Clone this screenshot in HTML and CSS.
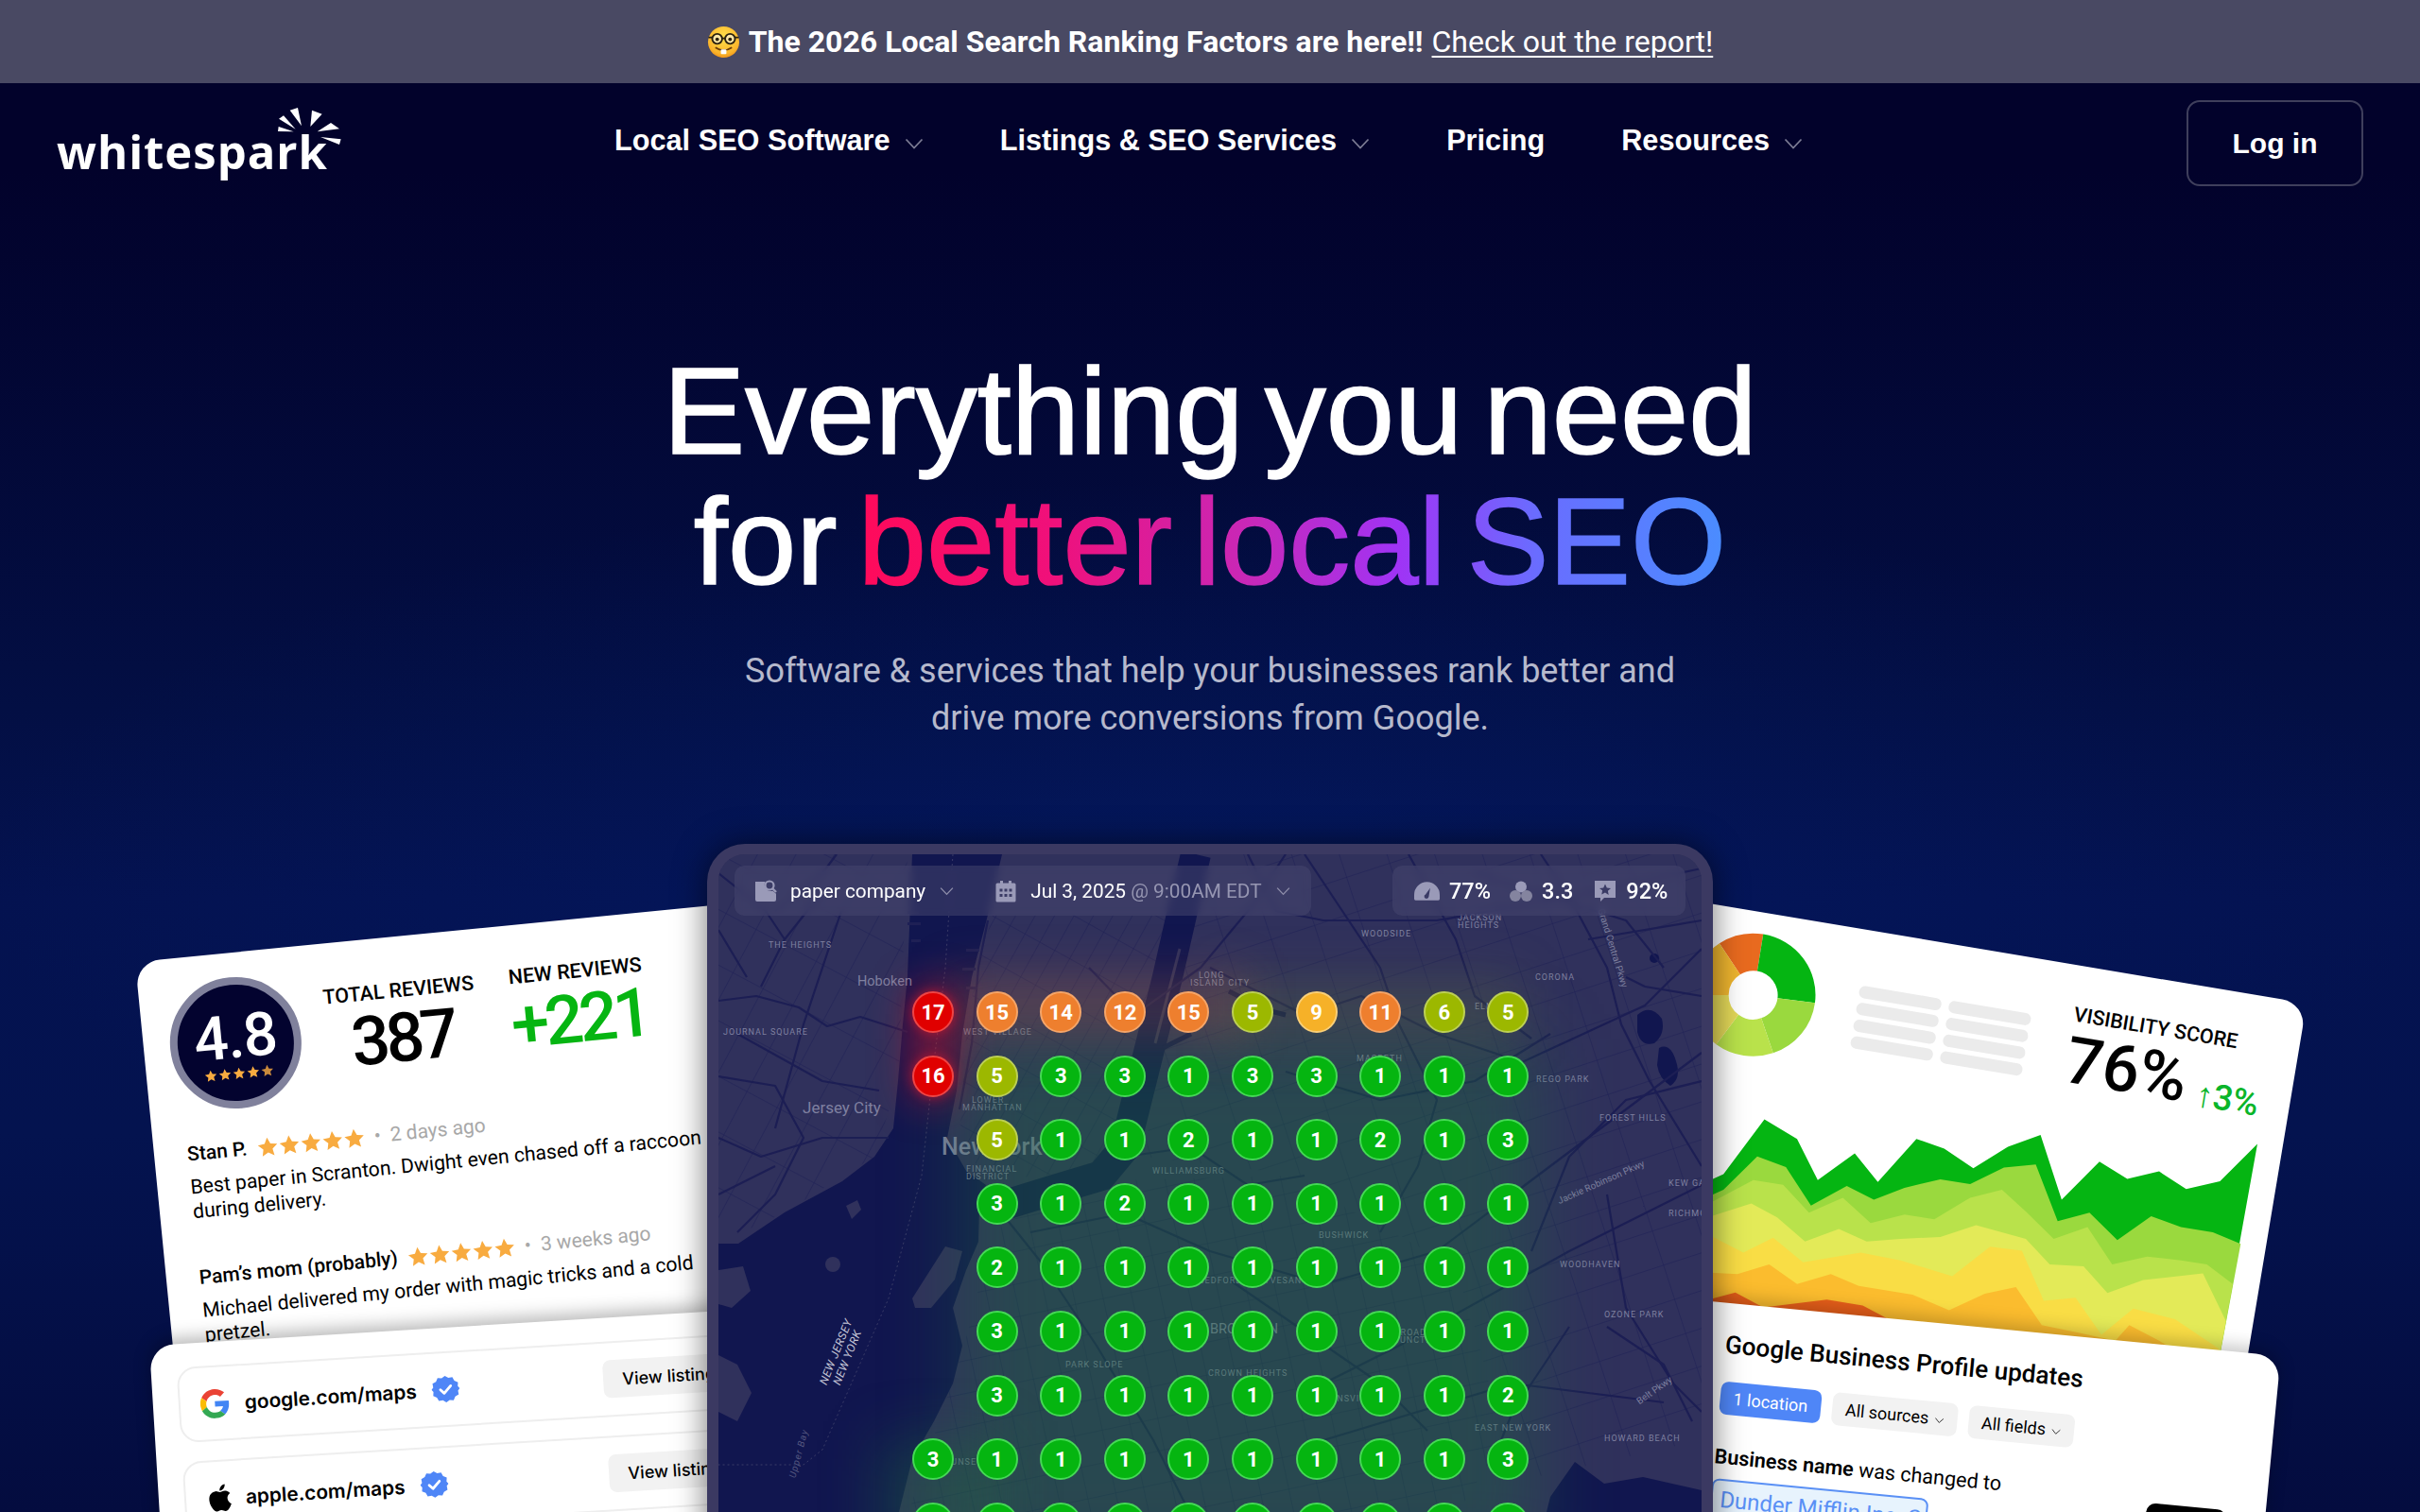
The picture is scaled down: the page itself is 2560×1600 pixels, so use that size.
FILE: index.html
```html
<!DOCTYPE html>
<html lang="en">
<head>
<meta charset="utf-8">
<title>Whitespark</title>
<link rel="stylesheet" href="styles.css">
</head>
<body>
<svg class="defs" width="0" height="0" aria-hidden="true">
  <defs>
    <symbol id="star" viewBox="0 0 24 24"><path d="M12 1.500l3.200 6.900 7.500.9-5.600 5.100 1.500 7.400L12 18.100l-6.600 3.700 1.500-7.400-5.600-5.100 7.500-.9z"/></symbol>
    <symbol id="chev" viewBox="0 0 20 12"><path d="M1.500 1.500L10 10.500l8.500-9" fill="none" stroke="currentColor" stroke-width="1.800"/></symbol>
    <symbol id="badge" viewBox="0 0 30 30">
      <path fill="#4f86f7" d="M15 1l3.600 2.300 4.200-.5 1.900 3.800 3.800 1.900-.5 4.200L30 15l-2 2.300.5 4.200-3.800 1.900-1.900 3.800-4.200-.5L15 29l-3.600-2.300-4.200.5-1.900-3.800-3.800-1.900.5-4.200L0 15l2-2.300-.5-4.200 3.800-1.900 1.900-3.800 4.200.5z"/>
      <path d="M9.500 15.500l3.800 3.800 7.200-7.500" fill="none" stroke="#fff" stroke-width="2.800" stroke-linecap="round" stroke-linejoin="round"/>
    </symbol>
  </defs>
</svg>

<div class="banner">
  <svg class="nerd" viewBox="0 0 36 36" aria-hidden="true">
    <defs><radialGradient id="nerdFace" cx="50%" cy="35%" r="70%"><stop offset="0" stop-color="#ffe14d"/><stop offset=".75" stop-color="#fbb52b"/><stop offset="1" stop-color="#ec8a14"/></radialGradient></defs>
    <circle cx="18" cy="18" r="17" fill="url(#nerdFace)"/>
    <circle cx="11" cy="14.500" r="5.400" fill="#ffe9a8" stroke="#2b2210" stroke-width="2"/>
    <circle cx="25" cy="14.500" r="5.400" fill="#ffe9a8" stroke="#2b2210" stroke-width="2"/>
    <path d="M16 14h4M1.500 13h4M30.500 13h4" stroke="#2b2210" stroke-width="2"/>
    <circle cx="11" cy="15" r="2" fill="#2b2210"/><circle cx="25" cy="15" r="2" fill="#2b2210"/>
    <path d="M9 24q9 6 18 0" fill="none" stroke="#6b3d08" stroke-width="1.800"/>
    <rect x="15" y="26" width="6" height="5" rx="1" fill="#fff"/>
  </svg>
  <span class="banner-strong">The 2026 Local Search Ranking Factors are here!!</span>
  <a class="banner-link" href="#">Check out the report!</a>
</div>

<nav class="nav">
  <a class="logo" href="#">
    <span class="logo-word">whitespark</span>
    <svg class="logo-rays" viewBox="0 0 300 270" aria-hidden="true">
      <path fill="#fff" d="M110 38l25-8 12 58zM180 38l32 12-37 40zM75 65l15-10 38 43zM74 90l-2 15 50 1zM240 78l27 19-70 9zM272 130l-5 17-60-24z"/>
    </svg>
  </a>
  <ul class="nav-links">
    <li class="nav-item">Local SEO Software <svg class="chev"><use href="#chev"/></svg></li>
    <li class="nav-item">Listings &amp; SEO Services <svg class="chev"><use href="#chev"/></svg></li>
    <li class="nav-item">Pricing</li>
    <li class="nav-item">Resources <svg class="chev"><use href="#chev"/></svg></li>
  </ul>
  <a class="login" href="#">Log in</a>
</nav>

<header class="hero">
  <h1 class="title">Everything you need<br>for <span class="grad">better local SEO</span></h1>
  <p class="sub">Software &amp; services that help your businesses rank better and<br>drive more conversions from Google.</p>
</header>

<section class="stage">

  <article class="card reviews">
    <div class="rev-head">
      <div class="rating">
        <b class="rating-num">4.8</b>
        <span class="rating-stars">
          <svg><use href="#star"/></svg><svg><use href="#star"/></svg><svg><use href="#star"/></svg><svg><use href="#star"/></svg><svg class="half"><use href="#star"/></svg>
        </span>
      </div>
      <div class="stat stat-total"><span class="stat-label">TOTAL REVIEWS</span><strong class="stat-num">387</strong></div>
      <div class="stat stat-new"><span class="stat-label">NEW REVIEWS</span><strong class="stat-num green">+221</strong></div>
    </div>
    <div class="review">
      <div class="rev-meta"><b>Stan P.</b>
        <span class="stars"><svg><use href="#star"/></svg><svg><use href="#star"/></svg><svg><use href="#star"/></svg><svg><use href="#star"/></svg><svg><use href="#star"/></svg></span>
        <span class="rev-date">•</span><span class="rev-date">2 days ago</span></div>
      <p>Best paper in Scranton. Dwight even chased off a raccoon during delivery.</p>
    </div>
    <div class="review">
      <div class="rev-meta"><b>Pam’s mom (probably)</b>
        <span class="stars"><svg><use href="#star"/></svg><svg><use href="#star"/></svg><svg><use href="#star"/></svg><svg><use href="#star"/></svg><svg><use href="#star"/></svg></span>
        <span class="rev-date">•</span><span class="rev-date">3 weeks ago</span></div>
      <p>Michael delivered my order with magic tricks and a cold pretzel.</p>
    </div>
  </article>

  <article class="card listings">
    <div class="listing">
      <svg class="brand" viewBox="0 0 48 48" aria-hidden="true">
        <path fill="#ea4335" d="M24 9.500c3.500 0 6.700 1.200 9.200 3.600l6.900-6.900C35.900 2.400 30.500 0 24 0 14.600 0 6.500 5.400 2.600 13.200l8 6.200C12.400 13.700 17.700 9.500 24 9.500z"/>
        <path fill="#4285f4" d="M47 24.500c0-1.600-.1-3.100-.4-4.500H24v9h12.900c-.6 3-2.300 5.500-4.800 7.200l7.700 6C44.300 38 47 31.800 47 24.500z"/>
        <path fill="#fbbc05" d="M10.500 28.600c-.5-1.400-.8-3-.8-4.600s.3-3.200.8-4.600l-8-6.200C.9 16.500 0 20.100 0 24s.9 7.500 2.600 10.800z"/>
        <path fill="#34a853" d="M24 48c6.500 0 11.900-2.100 15.900-5.800l-7.700-6c-2.200 1.400-4.900 2.300-8.200 2.300-6.300 0-11.600-4.200-13.500-9.900l-8 6.200C6.500 42.600 14.600 48 24 48z"/>
      </svg>
      <span class="listing-name">google.com/maps</span>
      <svg class="verified"><use href="#badge"/></svg>
      <span class="listing-btn">View listing</span>
    </div>
    <div class="listing">
      <svg class="brand brand-apple" viewBox="2 1 20 22" aria-hidden="true"><path fill="#000" d="M17.050 12.540c-.03-2.550 2.080-3.770 2.170-3.830-1.180-1.730-3.030-1.970-3.680-2-1.570-.16-3.060.92-3.860.92-.8 0-2.030-.9-3.330-.87-1.710.03-3.290 1-4.170 2.530-1.780 3.090-.46 7.660 1.280 10.170.85 1.230 1.860 2.610 3.190 2.560 1.280-.05 1.760-.83 3.310-.83 1.540 0 1.980.83 3.330.8 1.380-.02 2.250-1.250 3.090-2.490.98-1.430 1.380-2.810 1.400-2.880-.03-.01-2.690-1.030-2.730-4.280zM14.510 5.060c.7-.86 1.180-2.040 1.050-3.230-1.010.04-2.240.68-2.970 1.530-.65.750-1.220 1.960-1.070 3.120 1.130.09 2.290-.57 2.990-1.420z"/></svg>
      <span class="listing-name">apple.com/maps</span>
      <svg class="verified"><use href="#badge"/></svg>
      <span class="listing-btn">View listing</span>
    </div>
  </article>

  <article class="card visibility">
    <svg class="vis-art" aria-hidden="true">
      <g transform="rotate(-9.5) translate(70 7) scale(.4209 .4149)">
        <path fill="#e86a1f" d="M45 116A157 157 0 0 1 155 93L140 187A62 62 0 0 0 97 196Z"/>
        <path fill="#05b512" d="M155 93A157 157 0 0 1 285 268L191 256A62 62 0 0 0 140 187Z"/>
        <path fill="#9ad93e" d="M285 268A157 157 0 0 1 180 396L150 307A62 62 0 0 0 191 256Z"/>
        <path fill="#b9e24b" d="M180 396A157 157 0 0 1 37 374L93 298A62 62 0 0 0 150 307Z"/>
        <path fill="#e3d858" d="M37 374A157 157 0 0 1 -27 248L68 248A62 62 0 0 0 93 298Z"/>
        <path fill="#eeb52f" d="M-27 248A157 157 0 0 1 45 116L97 196A62 62 0 0 0 68 248Z"/>
        <path fill="#05b512" d="M-60 740L0 730 55 705 158 565 240 615 292 720 385 652 443 725 540 615 610 640 683 690 770 635 852 605 905 770 1000 673 1070 717 1150 698 1218 743 1303 723 1397 628 1260 1400-60 1400Z"/>
        <path fill="#9ad93e" d="M-60 790L0 770 55 745 140 660 212 687 275 785 365 735 433 770 510 740 600 718 675 730 760 688 840 680 895 825 975 803 1045 873 1130 812 1205 840 1285 853 1355 883 1260 1400-60 1400Z"/>
        <path fill="#b9e24b" d="M-60 810L0 790 130 720 205 732 270 803 355 765 425 830 510 808 585 820 675 765 755 745 815 800 885 870 970 840 1032 935 1120 915 1205 925 1270 935 1335 985 1260 1400-60 1400Z"/>
        <path fill="#e3ea58" d="M-60 840L0 820 125 780 190 815 260 877 345 845 415 877 500 870 600 865 690 835 815 870 875 935 960 940 1020 1008 1110 975 1260 958 1318 1080 1260 1400-60 1400Z"/>
        <path fill="#f9dd45" d="M-60 820L0 850 105 905 180 867 255 930 400 905 500 925 630 965 725 890 805 900 860 1028 940 1020 1005 1115 1085 1048 1190 1075 1300 1150 1260 1400-60 1400Z"/>
        <path fill="#fbbc2e" d="M-60 950L0 955 90 960 170 935 240 985 325 960 395 990 530 1012 622 1052 712 1010 790 993 855 1090 950 1110 1040 1130 1075 1090 1150 1130 1200 1160 1200 1400-60 1400Z"/>
        <path fill="#e85f1a" d="M-60 1040L0 1030 85 1007 155 1045 315 1025 405 1040 470 1075 600 1400-60 1400Z"/>
      </g>
    </svg>
    <div class="vis-head">
      <div class="bars"><i></i><i></i><i></i><i></i><i></i><i></i><i></i><i></i></div>
      <div class="score">
        <span class="score-label">VISIBILITY SCORE</span>
        <div class="score-row"><strong>76%</strong><span class="score-delta">↑3%</span></div>
      </div>
    </div>
  </article>

  <article class="card updates">
    <h3 class="upd-title">Google Business Profile updates</h3>
    <div class="chips">
      <span class="chip chip-on">1 location</span>
      <span class="chip">All sources <svg class="chip-chev"><use href="#chev"/></svg></span>
      <span class="chip">All fields <svg class="chip-chev"><use href="#chev"/></svg></span>
    </div>
    <div class="upd-body">
      <div class="upd-col">
        <p class="upd-line"><b>Business name</b> was changed to</p>
        <span class="upd-value">Dunder Mifflin Inc. Scranton</span>
      </div>
      <span class="upd-black"></span>
    </div>
  </article>

  <div class="mapframe">
    <div class="map">
      <svg class="map-art" viewBox="0 0 1040 700" aria-hidden="true">
        <defs>
          <pattern id="gm" width="18" height="42" patternUnits="userSpaceOnUse" patternTransform="rotate(29)"><path d="M0 0H18M0 0V42" stroke="#1d1f55" stroke-width="1" fill="none"/></pattern>
          <pattern id="gb" width="30" height="34" patternUnits="userSpaceOnUse" patternTransform="rotate(-12)"><path d="M0 0H30M0 0V34" stroke="#1e2056" stroke-width="1" fill="none"/></pattern>
          <pattern id="gq" width="48" height="38" patternUnits="userSpaceOnUse" patternTransform="rotate(-18)"><path d="M0 0H48M0 0V38" stroke="#1e2056" stroke-width="1" fill="none"/></pattern>
          <pattern id="gj" width="52" height="36" patternUnits="userSpaceOnUse" patternTransform="rotate(-62)"><path d="M0 0H52M0 0V36" stroke="#1e2056" stroke-width="1" fill="none"/></pattern>
        </defs>
        <rect width="1040" height="700" fill="#30315c"/>
        <path fill="url(#gj)" d="M0 0H200L190 240 165 320 70 379 0 412Z"/>
        <path fill="url(#gm)" d="M290 64L490 64 470 130 450 190 430 310 400 335 283 345 255 300 262 190 272 130Z"/>
        <path fill="url(#gq)" d="M500 0L1040 0 1040 300 780 440 620 340 450 320 480 140Z"/>
        <path fill="url(#gb)" d="M300 390L430 345 600 340 750 420 800 500 830 620 780 700 200 700 260 520 280 440Z"/>
        <path fill="url(#gq)" d="M780 440L1040 300 1040 620 860 660 830 620 800 500Z"/>
        <g fill="#11164f">
          <path d="M205 0L300 0 285 64 268 130 258 190 252 250 242 300 262 335 283 350 276 372 275 410 262 440 248 480 258 520 248 560 228 600 205 640 190 700 0 700 0 412 21 412 70 379 131 346 165 320 185 290 190 240 195 180 200 130Z"/>
          <path d="M875 700L880 680 906 643 937 666 978 659 1040 673 1040 700Z"/>
          <path d="M972 170q14-12 26 4q4 16-8 26q-14 4-18-12z"/>
          <path d="M995 205q12-6 18 14q6 18-6 26q-12-8-14-22z"/>
          <circle cx="990" cy="110" r="5"/>
        </g>
        <path d="M505 0L490 64 475 130 460 190 445 250 430 310 405 340 355 355 300 372" fill="none" stroke="#11164f" stroke-width="32"/>
        <path d="M540 145L580 165 600 170M470 205L500 190" fill="none" stroke="#11164f" stroke-width="5"/>
        <path d="M488 100L462 200" fill="none" stroke="#30315c" stroke-width="3"/>
        <g fill="#30315c">
          <path d="M205 470L240 415 258 420 250 450 225 480 208 480Z"/>
          <circle cx="121" cy="434" r="8"/>
          <path d="M135 372l12-6 4 10-10 10z"/>
          <path d="M0 530L20 540 35 570 20 600 0 590Z"/>
          <path d="M0 440L26 436 34 462 14 480 0 476Z"/>
        </g>
        <g fill="none" stroke="#1c1e54" stroke-width="2.200" stroke-linejoin="round">
          <path d="M0 155L40 150 85 162 115 182 150 172 200 188"/>
          <path d="M60 60L110 20 125 0"/>
          <path d="M45 140L70 90 110 40"/>
          <path d="M0 235L60 245 90 300 60 360 20 400"/>
          <path d="M285 70L275 120 268 200 255 270"/>
          <path d="M392 120L440 170 510 120 560 60 600 0"/>
          <path d="M520 120L620 170 680 150 760 190 850 220 980 160 1040 100"/>
          <path d="M620 0L660 60 700 120 720 180 760 260 740 330 700 400"/>
          <path d="M760 70L900 45 1040 15"/>
          <path d="M730 0L780 90 800 150 860 195"/>
          <path d="M870 0L900 45 940 120 955 180 985 240 1040 330"/>
          <path d="M1040 150L980 140 960 130"/>
          <path d="M800 20L960 70 1000 120"/>
          <path d="M600 230L700 260 800 240 880 190"/>
          <path d="M430 320L500 310 560 350 620 340"/>
          <path d="M300 380L340 430 400 520 460 620 500 700"/>
          <path d="M330 400L430 380 520 420 640 455 760 420 840 360 1040 210"/>
          <path d="M540 450L700 560 750 610"/>
          <path d="M640 560L720 520 900 420 1040 350"/>
          <path d="M940 360L960 480 1010 560 1040 590"/>
          <path d="M640 620L840 560 1000 580"/>
          <path d="M940 500L1000 540 1030 600"/>
          <path d="M820 640L840 590 900 500"/>
          <path d="M0 20L50 60 70 90M0 80L30 130M130 60L90 180 60 290M20 190L110 240 170 250"/>
          <path d="M0 300L45 320 110 300 180 300M0 360L60 330"/>
          <path d="M560 0L590 60 640 70 760 70M920 90L1040 70M1040 240L960 260 900 320 860 420"/>
        </g>
        <g fill="#1e2055">
          <path d="M200 60h12v3h-12zM200 72h14v3h-14zM204 90h10v3h-10zM262 100h14v3h-14zM258 120h14v3h-14zM262 140h12v3h-12z"/>
        </g>
        <g fill="none" stroke="#3a3c68" stroke-width="1" stroke-dasharray="2 3">
          <path d="M248 0L240 120 228 220 215 340 180 470 110 630 90 646H0"/>
        </g>
        <g class="map-labels">
          <text x="53" y="99">THE HEIGHTS</text>
          <text x="5" y="191">JOURNAL SQUARE</text>
          <text x="259" y="191">WEST VILLAGE</text>
          <text x="268" y="263">LOWER</text><text x="258" y="271" >MANHATTAN</text>
          <text x="262" y="336">FINANCIAL</text><text x="262" y="344">DISTRICT</text>
          <text x="508" y="131">LONG</text><text x="499" y="139">ISLAND CITY</text>
          <text x="680" y="87">WOODSIDE</text>
          <text x="864" y="133">CORONA</text>
          <text x="782" y="70">JACKSON</text><text x="782" y="78">HEIGHTS</text>
          <text x="675" y="219">MASPETH</text>
          <text x="800" y="164">ELMHURST</text>
          <text x="865" y="241">REGO PARK</text>
          <text x="932" y="282">FOREST HILLS</text>
          <text x="1005" y="351">KEW GARDENS</text>
          <text x="459" y="338">WILLIAMSBURG</text>
          <text x="1005" y="383">RICHMOND HILL</text>
          <text x="890" y="437">WOODHAVEN</text>
          <text x="635" y="406">BUSHWICK</text>
          <text x="508" y="454">BEDFORD-STUYVESANT</text>
          <text x="937" y="490">OZONE PARK</text>
          <text x="367" y="543">PARK SLOPE</text>
          <text x="518" y="552">CROWN HEIGHTS</text>
          <text x="625" y="579">BROWNSVILLE</text>
          <text x="800" y="610">EAST NEW YORK</text>
          <text x="937" y="621">HOWARD BEACH</text>
          <text x="240" y="646">SUNSET PARK</text>
          <text x="715" y="509">BROADWAY</text><text x="715" y="517">JUNCTION</text>
          <text x="147" y="139" class="lab-big">Hoboken</text>
          <text x="89" y="274" class="lab-lg">Jersey City</text>
          <text x="236" y="318" class="lab-xl">New York</text>
          <text x="520" y="507" class="lab-big">BROOKLYN</text>
          <text transform="translate(128 528) rotate(-68)" class="lab-state" text-anchor="middle">NEW JERSEY</text>
          <text transform="translate(140 534) rotate(-68)" class="lab-state" text-anchor="middle">NEW YORK</text>
          <text transform="translate(88 635) rotate(-75)" class="lab-water" text-anchor="middle">Upper Bay</text>
          <text transform="translate(943 100) rotate(73)" class="lab-road" text-anchor="middle">Grand Central Pkwy</text>
          <text transform="translate(935 350) rotate(-24)" class="lab-road" text-anchor="middle">Jackie Robinson Pkwy</text>
          <text transform="translate(992 570) rotate(-35)" class="lab-road" text-anchor="middle">Belt Pkwy</text>
        </g>
      </svg>
      <div class="heat heat-green"></div>
      <div class="heat heat-green2"></div>
      <div class="heat heat-olive"></div>
      <div class="heat heat-orange"></div>
      <div class="heat heat-red"></div>

      <div class="pins">
        <i class="pin r">17</i><i class="pin o">15</i><i class="pin o">14</i><i class="pin o">12</i><i class="pin o">15</i><i class="pin l">5</i><i class="pin y">9</i><i class="pin o">11</i><i class="pin l">6</i><i class="pin l">5</i>
        <i class="pin r">16</i><i class="pin l">5</i><i class="pin g">3</i><i class="pin g">3</i><i class="pin g">1</i><i class="pin g">3</i><i class="pin g">3</i><i class="pin g">1</i><i class="pin g">1</i><i class="pin g">1</i>
        <i class="pin none"></i><i class="pin l">5</i><i class="pin g">1</i><i class="pin g">1</i><i class="pin g">2</i><i class="pin g">1</i><i class="pin g">1</i><i class="pin g">2</i><i class="pin g">1</i><i class="pin g">3</i>
        <i class="pin none"></i><i class="pin g">3</i><i class="pin g">1</i><i class="pin g">2</i><i class="pin g">1</i><i class="pin g">1</i><i class="pin g">1</i><i class="pin g">1</i><i class="pin g">1</i><i class="pin g">1</i>
        <i class="pin none"></i><i class="pin g">2</i><i class="pin g">1</i><i class="pin g">1</i><i class="pin g">1</i><i class="pin g">1</i><i class="pin g">1</i><i class="pin g">1</i><i class="pin g">1</i><i class="pin g">1</i>
        <i class="pin none"></i><i class="pin g">3</i><i class="pin g">1</i><i class="pin g">1</i><i class="pin g">1</i><i class="pin g">1</i><i class="pin g">1</i><i class="pin g">1</i><i class="pin g">1</i><i class="pin g">1</i>
        <i class="pin none"></i><i class="pin g">3</i><i class="pin g">1</i><i class="pin g">1</i><i class="pin g">1</i><i class="pin g">1</i><i class="pin g">1</i><i class="pin g">1</i><i class="pin g">1</i><i class="pin g">2</i>
        <i class="pin g">3</i><i class="pin g">1</i><i class="pin g">1</i><i class="pin g">1</i><i class="pin g">1</i><i class="pin g">1</i><i class="pin g">1</i><i class="pin g">1</i><i class="pin g">1</i><i class="pin g">3</i>
        <i class="pin g">1</i><i class="pin g">1</i><i class="pin g">1</i><i class="pin g">1</i><i class="pin g">1</i><i class="pin g">1</i><i class="pin g">1</i><i class="pin g">1</i><i class="pin g">1</i><i class="pin g">1</i>
      </div>

      <div class="panel panel-left">
        <svg class="tool-ic" viewBox="0 0 24 24" aria-hidden="true">
          <path fill="#9a9ab8" d="M1 2h10.500a7 7 0 0 0 8 9.800l3.500 3V21a2 2 0 0 1-2 2H3a2 2 0 0 1-2-2z"/>
          <circle cx="16" cy="6" r="4.500" fill="none" stroke="#9a9ab8" stroke-width="2.200"/>
          <path d="M19.500 9.500l3.500 3.500" stroke="#9a9ab8" stroke-width="2.400"/>
        </svg>
        <span class="tool-text">paper company</span>
        <svg class="tool-chev"><use href="#chev"/></svg>
        <svg class="tool-ic tool-cal" viewBox="0 0 24 24" aria-hidden="true">
          <path fill="#9a9ab8" fill-rule="evenodd" d="M3 3.500h3V1h3v2.500h6V1h3v2.500h3a1.500 1.500 0 0 1 1.500 1.500v17a1.500 1.500 0 0 1-1.500 1.500H3A1.500 1.500 0 0 1 1.500 22V5A1.500 1.500 0 0 1 3 3.500zM5.500 9.500v3h3v-3zM10.500 9.500v3h3v-3zM15.500 9.500v3h3v-3zM5.500 15v3h3v-3zM10.500 15v3h3v-3zM15.500 15v3h3v-3z"/>
        </svg>
        <span class="tool-text">Jul 3, 2025 <span class="tool-muted">@ 9:00AM EDT</span></span>
        <svg class="tool-chev"><use href="#chev"/></svg>
      </div>
      <div class="panel panel-right">
        <svg class="tool-ic gauge" viewBox="0 0 28 20" aria-hidden="true">
          <path fill="#9a9ab8" fill-rule="evenodd" d="M14 0a14 14 0 0 1 14 14v4.500a1.500 1.500 0 0 1-1.500 1.500h-25A1.500 1.500 0 0 1 0 18.500V14A14 14 0 0 1 14 0zM12.500 13.500a2.500 2.500 0 1 0 3.500 2.500l1.500-9.500z"/>
        </svg>
        <b class="metric">77%</b>
        <svg class="tool-ic clover" viewBox="0 0 24 24" aria-hidden="true">
          <circle cx="12" cy="7.500" r="6" fill="#9a9ab8"/><circle cx="6" cy="17" r="6" fill="#84849f"/><circle cx="18" cy="17" r="6" fill="#84849f"/>
        </svg>
        <b class="metric">3.3</b>
        <svg class="tool-ic bubble" viewBox="0 0 24 24" aria-hidden="true">
          <path fill="#9a9ab8" fill-rule="evenodd" d="M1 1h22v18H11l-4 4v-4H1zM12 4.500l1.800 3.900 4.200.5-3.100 2.900.8 4.200L12 13.400l-3.700 2.100.8-4.200L6 8.900l4.200-.5z"/>
        </svg>
        <b class="metric">92%</b>
      </div>
    </div>
  </div>
</section>
</body>
</html>
```
FILE: styles.css
```css
* { box-sizing: border-box; }
html, body { margin: 0; padding: 0; }
body {
  width: 2560px;
  height: 1600px;
  overflow: hidden;
  color: #fff;
  font-family: Roboto, "Liberation Sans", sans-serif;
  background:
    radial-gradient(ellipse 1300px 420px at 50% 930px, rgba(4, 30, 110, .45), rgba(4, 30, 110, 0)),
    linear-gradient(180deg, #02022b 0, #02022b 180px, #030f44 750px, #041250 950px, #04134f 1200px, #040c3f 1600px);
}
.defs { position: absolute; }

/* banner */
.banner {
  height: 88px;
  background: #494963;
  display: flex;
  align-items: center;
  justify-content: center;
  gap: 9px;
  font-size: 32px;
}
.nerd { width: 35px; height: 35px; }
.banner-strong { font-weight: 700; }
.banner-link { color: #fff; text-decoration: underline; text-underline-offset: 4px; text-decoration-thickness: 2px; }

/* nav */
.nav {
  height: 127px;
  display: flex;
  align-items: center;
  padding: 0 60px;
}
.logo { position: relative; display: block; width: 590px; color: #fff; text-decoration: none; }
.logo-word { font-family: "Open Sans", sans-serif; font-weight: 700; font-size: 49px; letter-spacing: 1px; line-height: 1; display: block; margin-top: 18px; }
.logo-rays { position: absolute; left: 210px; top: -14px; width: 100px; height: 90px; }
.nav-links { list-style: none; margin: 0 0 5px; padding: 0; display: flex; gap: 81px; }
.nav-item { font-family: "Liberation Sans", Arial, sans-serif; font-weight: 700; font-size: 30.7px; display: flex; align-items: center; gap: 6.500px; white-space: pre; }
.chev { width: 20px; height: 12px; color: #7c7c94; margin-top: 6px; }
.login {
  margin-left: auto;
  width: 187px;
  height: 91px;
  border: 2px solid #3f3f5c;
  border-radius: 14px;
  display: flex;
  align-items: center;
  justify-content: center;
  color: #fff;
  text-decoration: none;
  font-family: "Liberation Sans", Arial, sans-serif;
  font-weight: 700;
  font-size: 30px;
}

/* hero */
.hero { padding-top: 151px; text-align: center; }
.title {
  margin: 0;
  font-family: "Liberation Sans", Arial, sans-serif;
  font-weight: 400;
  font-size: 130px;
  line-height: 138px;
  word-spacing: -14px;
  -webkit-text-stroke: 1.600px #fff;
}
.grad {
  background: linear-gradient(90deg, #ff0a5a 0%, #f0107a 22%, #c828b8 45%, #a033f5 62%, #6a6cff 78%, #4a8dff 100%);
  -webkit-background-clip: text;
  background-clip: text;
  color: transparent;
  -webkit-text-stroke: 1.600px transparent;
}
.sub {
  margin: 43px 0 0;
  font-size: 36px;
  line-height: 50px;
  color: #b6b9cc;
}

/* stage */
.stage { position: relative; height: 707px; margin-top: 108px; }
.card { position: absolute; background: #fff; color: #000; transform-origin: 0 0; border-radius: 26px; }

.mapframe {
  position: relative;
  z-index: 5;
  width: 1064px;
  height: 800px;
  margin: 0 auto;
  padding: 11px 12px 0;
  background: #3b3962;
  border-radius: 40px 40px 0 0;
  box-shadow: 0 0 34px rgba(0, 0, 0, .55);
}
.map { position: relative; height: 789px; background: #30315c; border-radius: 28px 28px 0 0; overflow: hidden; }
.map-art { position: absolute; left: 0; top: 0; width: 1040px; height: 700px; }
.map-labels { font-family: Roboto, sans-serif; font-size: 9px; letter-spacing: 1px; fill: #7f80a0; }
.lab-big { font-size: 14.5px; letter-spacing: 0; }
.lab-lg { font-size: 17px; letter-spacing: 0; }
.lab-xl { font-size: 25px; letter-spacing: 0; font-weight: 500; }
.lab-state { font-size: 12px; letter-spacing: .5px; fill: #c4c5d6; font-style: italic; }
.lab-water { font-size: 10px; font-style: italic; fill: #54577f; }
.lab-road { font-size: 10px; letter-spacing: 0; fill: #7d7f9e; }

.heat { position: absolute; }
.heat-green { left: 255px; top: 195px; width: 610px; height: 560px; background: rgba(30, 110, 60, .38); filter: blur(40px); }
.heat-green2 { left: 170px; top: 620px; width: 130px; height: 130px; background: rgba(30, 110, 60, .36); filter: blur(30px); }
.heat-olive { left: 530px; top: 130px; width: 320px; height: 70px; background: rgba(120, 130, 50, .2); filter: blur(26px); }
.heat-orange { left: 240px; top: 125px; width: 320px; height: 70px; background: rgba(210, 110, 60, .22); filter: blur(24px); }
.heat-red { left: 205px; top: 140px; width: 44px; height: 120px; background: rgba(235, 20, 40, .5); filter: blur(22px); }

.pins {
  position: absolute;
  left: 205px;
  top: 145px;
  display: grid;
  grid-template-columns: repeat(10, 44px);
  grid-auto-rows: 44px;
  gap: 23.6px;
}
.pin {
  width: 44px;
  height: 44px;
  border-radius: 50%;
  border: 2px solid;
  display: flex;
  align-items: center;
  justify-content: center;
  font-style: normal;
  font-weight: 700;
  font-size: 22px;
  color: #fff;
}
.pin.none { visibility: hidden; }
.pin.r { background: #e00000; border-color: #ee4545; box-shadow: 0 0 12px rgba(240, 20, 40, .6); }
.pin.o { background: #ee7f2e; border-color: #f5a568; }
.pin.y { background: #f6b128; border-color: #f9cf78; }
.pin.l { background: #9cb800; border-color: #bdd054; }
.pin.g { background: #05b510; border-color: #45d955; }

.panel {
  position: absolute;
  top: 12px;
  height: 53px;
  background: rgba(72, 72, 112, .5);
  -webkit-backdrop-filter: blur(4px);
  backdrop-filter: blur(4px);
  border-radius: 10px;
  display: flex;
  align-items: center;
}
.panel-left { left: 17px; width: 610px; padding-left: 21px; }
.panel-right { left: 713px; width: 310px; padding-left: 23px; }
.tool-ic { width: 24px; height: 24px; flex: none; }
.tool-text { font-size: 20.8px; font-weight: 400; margin-left: 14px; white-space: pre; }
.tool-muted { color: #9696b2; }
.tool-chev { width: 15px; height: 10px; color: #8f8fab; margin-left: 15px; flex: none; }
.tool-cal { margin-left: 43px; }
.gauge { width: 27px; height: 20px; }
.clover { margin-left: 20px; }
.bubble { margin-left: 22px; }
.metric { font-size: 23.5px; font-weight: 500; margin-left: 10px; }

/* reviews card */
.reviews { left: 143px; top: 125px; width: 700px; height: 480px; transform: rotate(-5.6deg); padding: 26px 0 0 28px; z-index: 1; }
.rev-head { display: flex; align-items: flex-start; }
.rating {
  width: 139px;
  height: 139px;
  flex: none;
  border-radius: 50%;
  background: #03032f;
  border: 8px solid #80819c;
  color: #fff;
  display: flex;
  flex-direction: column;
  align-items: center;
  justify-content: center;
}
.rating-num { font-weight: 500; font-size: 64px; line-height: 62px; letter-spacing: -1px; margin-top: 2px; }
.rating-stars { display: flex; gap: 1px; }
.rating-stars svg { width: 14px; height: 14px; fill: #f8ab40; }
.rating-stars .half { fill: #c98a3c; }
.stat { display: flex; flex-direction: column; align-items: center; width: 160px; flex: none; }
.stat-total { margin-left: 27px; margin-top: 18px; }
.stat-new { margin-left: 38px; margin-top: 16px; width: 140px; }
.stat-label { font-size: 21.5px; font-weight: 500; line-height: 26px; white-space: nowrap; }
.stat-num { font-size: 72px; line-height: 72px; font-weight: 500; letter-spacing: -4.500px; margin-top: 2px; }
.green { color: #06b512; }
.review { margin: 0 0 0 7px; width: 566px; }
.review + .review { margin-top: 44px; }
.rev-head + .review { margin-top: 30px; }
.rev-meta { display: flex; align-items: center; font-size: 21px; height: 26px; gap: 10px; white-space: nowrap; }
.rev-meta b { font-weight: 500; }
.stars { display: flex; gap: 0; }
.stars svg { width: 23px; height: 23px; fill: #f8ab40; }
.rev-date { color: #a8a8a8; font-size: 21px; }
.review p { margin: 9px 0 0; font-size: 21.2px; line-height: 26px; }

/* listings */
.listings { left: 158px; top: 531px; width: 664px; height: 400px; transform: rotate(-3.5deg); padding: 25px 27px; z-index: 2; box-shadow: 0 -6px 18px rgba(0, 0, 0, .28); }
.listing { display: flex; align-items: center; height: 80px; border: 2px solid #eeeeee; border-radius: 20px; padding: 0 19px 0 21px; }
.listing + .listing { margin-top: 20px; }
.brand { width: 31px; height: 31px; flex: none; }
.brand-apple { margin-right: -5px; }
.listing-name { font-family: Inter, sans-serif; font-weight: 600; font-size: 20.8px; margin-left: 16px; }
.verified { width: 30px; height: 30px; margin-left: 16px; flex: none; }
.listing-btn { margin-left: auto; background: #f2f2f2; border-radius: 8px; height: 40px; padding: 0 20px; display: flex; align-items: center; font-family: Inter, sans-serif; font-weight: 500; font-size: 18px; }

/* visibility */
.visibility { left: 1730px; top: 50px; width: 720px; height: 560px; transform: rotate(9.5deg); z-index: 1; }
.vis-art { position: absolute; left: 0; top: 0; width: 720px; height: 560px; overflow: visible; }
.vis-head { position: relative; display: flex; padding-left: 251px; }
.bars { display: grid; grid-template-columns: 88px 88px; gap: 5px 8px; margin-top: 59px; align-content: start; }
.bars i { height: 13px; border-radius: 6px; background: #ebebeb; }
.score { margin: 40px 0 0 44px; }
.score-label { display: block; font-size: 21.5px; line-height: 24px; font-weight: 500; white-space: nowrap; }
.score-row { display: flex; align-items: flex-end; gap: 12px; white-space: nowrap; margin-top: 2px; }
.score-row strong { font-size: 69px; line-height: 70px; font-weight: 500; }
.score-delta { font-size: 37px; line-height: 44px; font-weight: 500; color: #0ab52a; }

/* updates */
.updates { left: 1696px; top: 473px; width: 720px; height: 400px; transform: rotate(5.5deg); padding: 28px 0 0 134px; z-index: 2; box-shadow: 0 -6px 18px rgba(0, 0, 0, .22); }
.upd-title { margin: 0; font-size: 26.2px; line-height: 32px; font-weight: 500; white-space: nowrap; }
.chips { display: flex; gap: 12px; margin-top: 23px; }
.chip { height: 35px; padding: 0 14px; border-radius: 8px; background: #f2f2f2; display: flex; align-items: center; font-size: 18px; gap: 6px; white-space: nowrap; }
.chip-on { background: #4f86f7; color: #fff; width: 107px; justify-content: center; padding: 0; }
.chip-chev { width: 10px; height: 7px; margin-top: 3px; color: #333; }
.upd-body { display: flex; margin-top: 32px; }
.upd-line { margin: 0; font-size: 21.6px; line-height: 26px; white-space: nowrap; }
.upd-line b { font-weight: 600; }
.upd-value { display: block; margin-top: 10px; width: 230px; height: 44px; padding: 4px 8px; background: #e7f3fd; border: 2px solid #5a90f5; border-radius: 8px; font-size: 24px; line-height: 32px; color: #5a90f5; white-space: nowrap; overflow: hidden; }
.upd-black { width: 85px; height: 60px; margin: 18px 0 0 155px; border-radius: 10px; background: #000; }
```
